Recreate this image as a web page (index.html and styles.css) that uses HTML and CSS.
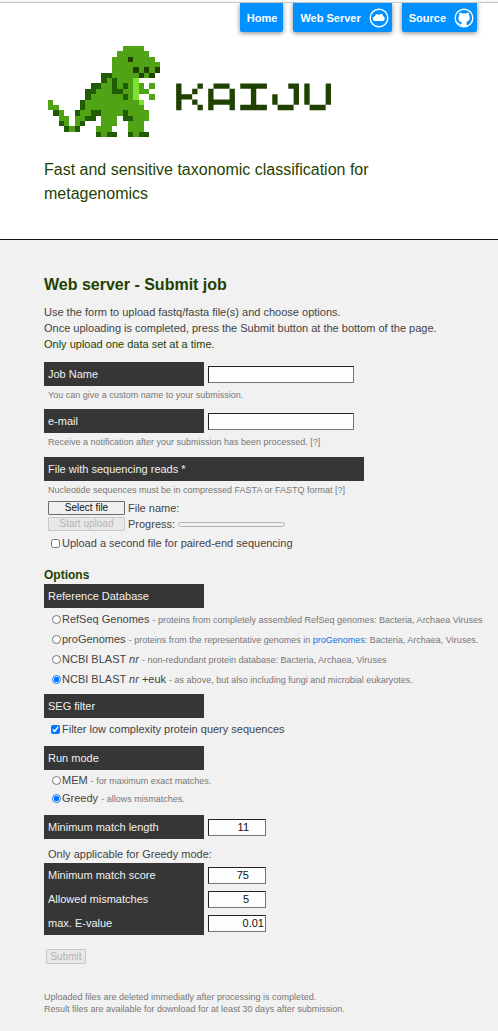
FILE: index.html
```html
<!DOCTYPE html>
<html lang="en">
<head>
<meta charset="utf-8">
<meta name="viewport" content="width=device-width, initial-scale=1">
<title>Kaiju - Web server</title>
<link rel="stylesheet" href="styles.css">
</head>
<body>
<header class="header">
  <nav class="nav">
    <a class="nav-link" href="#home">Home</a>
    <a class="nav-link" href="#server">Web Server
      <svg class="nav-icon" viewBox="0 0 20 20" aria-hidden="true">
        <circle cx="10" cy="10" r="8.8" fill="none" stroke="#fff" stroke-width="1.4"/>
        <path fill="#fff" d="M6 13a2.300 2.300 0 0 1-1.300-4.200L6 8.200 6.800 6.500 8.500 6 10 7.200 11.500 5.800 13.500 6.300 14.300 8.300A2.500 2.500 0 0 1 14 13z"/>
      </svg>
    </a>
    <a class="nav-link" href="#source">Source
      <svg class="nav-icon" viewBox="0 0 20 20" aria-hidden="true">
        <circle cx="10" cy="10" r="8.8" fill="none" stroke="#fff" stroke-width="1.4"/>
        <path fill="#fff" d="M5.500 4.500C6.500 4.400 7.500 4.900 8.300 5.500a8 8 0 0 1 3.600 0c.8-.6 1.800-1.100 2.800-1 .4.900.4 1.800.2 2.500.7.800 1 1.700.9 2.900-.2 2.500-1.600 3.500-3.700 3.800.5.500.7 1.100.7 1.900V19H7.500v-2.100c-1.900.4-2.500-.4-3-1.300-.3-.5-.6-.8-1-1.100 1.200-.3 1.700.5 2.200 1.200.5.6 1 .7 1.800.4.100-.9.300-1.300.6-1.600-2.200-.3-3.600-1.500-3.700-3.900 0-1.200.3-2.100.9-2.900-.2-.900-.2-1.800.2-3.200z"/>
      </svg>
    </a>
  </nav>
  <svg class="logo" viewBox="0 0 53 17" role="img" aria-label="Kaiju" fill="none" stroke-width="1">
    <g shape-rendering="crispEdges">
      <path stroke="#4fa314" d="M14 .5h4M13 1.500h6M12 2.500h8M12 3.500h9M12 4.500h9M12 5.500h7M11 6.500h5M10 7.500h8M19 7.500h1M9 8.500h10M8 9.500h8M19 9.500h1M0 10.500h1M7 10.500h10M0 11.500h2M7 11.500h11M2 12.500h1M6 12.500h13M2 13.500h2M5 13.500h2M10 13.500h3M16 13.500h3M3 14.500h1M5 14.500h1M10 14.500h3M15 14.500h3M4 15.500h1M9 15.500h3M15 15.500h3M10 16.500h1M16 16.500h1"/>
      <path stroke="#1f5c05" d="M10 5.500h2M10 6.500h1M12 6.500h1M8 7.500h2M12 7.500h1M14 7.500h1M7 8.500h2M12 8.500h2M7 9.500h1M14 9.500h1M6 10.500h1M6 11.500h1M1 12.500h1M5 12.500h1M8 12.500h2M14 12.500h1M7 13.500h2M14 13.500h2M2 14.500h1M6 14.500h1M3 15.500h1M5 15.500h1M9 16.500h1M11 16.500h2M15 16.500h1M17 16.500h2"/>
      <path stroke="#4fa314" d="M13 6.500h3"/>
      <path stroke="#7be234" d="M16 6.500h1M16 7.500h1M16 8.500h1M16 9.500h1M17 10.500h1"/>
      <path stroke="#1f4200" d="M15 2.500h1M16 4.500h1M18 4.500h1M20 4.500h1M17 5.500h1M19 5.500h1"/>
    </g>
    <g transform="translate(24 7)" stroke="#1f4200">
      <path d="M.5 0v5M1 2.500h2M4 .5h1M3 1.500h1M3 3.500h1M4 4.500h1"/>
      <path d="M7 .5h3M6.500 1v4M10.500 1v4M7 3.500h3"/>
      <path d="M12 .5h5M14.500 1v3M12 4.500h5"/>
      <path d="M21 .5h2M22.500 1v3M18.500 2v2M19 4.500h3"/>
      <path d="M24.500 0v4M28.500 0v4M25 4.500h3"/>
    </g>
  </svg>
  <p class="tagline">Fast and sensitive taxonomic classification for metagenomics</p>
</header>

<main class="main">
  <h1 class="title">Web server - Submit job</h1>
  <p class="intro">Use the form to upload fastq/fasta file(s) and choose options.<br>
    Once uploading is completed, press the Submit button at the bottom of the page.<br>
    <span class="notice">Only upload one data set at a time.</span></p>

  <form class="form">
    <div class="group">
      <div class="field"><label class="bar" for="job">Job Name</label><input class="text-input" id="job" type="text"></div>
      <p class="hint">You can give a custom name to your submission.</p>
    </div>
    <div class="group">
      <div class="field"><label class="bar" for="email">e-mail</label><input class="text-input" id="email" type="email"></div>
      <p class="hint">Receive a notification after your submission has been processed. [?]</p>
    </div>
    <div class="group upload">
      <div class="bar bar-wide">File with sequencing reads *</div>
      <p class="hint">Nucleotide sequences must be in compressed FASTA or FASTQ format [?]</p>
      <div class="upload-rows">
        <div class="upload-row"><button class="button" type="button">Select file</button><span>File name:</span></div>
        <div class="upload-row"><button class="button" type="button" disabled>Start upload</button><label for="progress">Progress:</label><progress class="progress" id="progress" value="0" max="100"></progress></div>
      </div>
      <label class="check"><input class="tick" type="checkbox">Upload a second file for paired-end sequencing</label>
    </div>

    <h2 class="subtitle">Options</h2>
    <div class="group">
      <div class="bar">Reference Database</div>
      <div class="choices databases">
        <label class="choice"><input class="radio" type="radio" name="db"><span>RefSeq Genomes <small class="note">- proteins from completely assembled RefSeq genomes: Bacteria, Archaea Viruses</small></span></label>
        <label class="choice"><input class="radio" type="radio" name="db"><span>proGenomes <small class="note">- proteins from the representative genomes in <a class="link" href="#progenomes">proGenomes</a>: Bacteria, Archaea, Viruses.</small></span></label>
        <label class="choice"><input class="radio" type="radio" name="db"><span>NCBI BLAST <i>nr</i> <small class="note">- non-redundant protein database: Bacteria, Archaea, Viruses</small></span></label>
        <label class="choice"><input class="radio" type="radio" name="db" checked><span>NCBI BLAST <i>nr</i> +euk <small class="note">- as above, but also including fungi and microbial eukaryotes.</small></span></label>
      </div>
    </div>
    <div class="group">
      <div class="bar">SEG filter</div>
      <label class="check seg"><input class="tick" type="checkbox" checked>Filter low complexity protein query sequences</label>
    </div>
    <div class="group">
      <div class="bar">Run mode</div>
      <div class="choices modes">
        <label class="choice"><input class="radio" type="radio" name="mode"><span>MEM <small class="note">- for maximum exact matches.</small></span></label>
        <label class="choice"><input class="radio" type="radio" name="mode" checked><span>Greedy <small class="note">- allows mismatches.</small></span></label>
      </div>
    </div>
    <div class="group">
      <div class="field"><label class="bar" for="length">Minimum match length</label><input class="text-input number" id="length" type="number" value="11"></div>
      <p class="condition">Only applicable for Greedy mode:</p>
      <div class="field"><label class="bar" for="score">Minimum match score</label><input class="text-input number" id="score" type="number" value="75"></div>
      <div class="field"><label class="bar" for="mismatches">Allowed mismatches</label><input class="text-input number" id="mismatches" type="number" value="5"></div>
      <div class="field"><label class="bar" for="evalue">max. E-value</label><input class="text-input number" id="evalue" type="text" value="0.01"></div>
    </div>
    <button class="button submit" type="submit" disabled>Submit</button>
  </form>
  <p class="retention">Uploaded files are deleted immediatly after processing is completed.<br>
    Result files are available for download for at least 30 days after submission.</p>
</main>
</body>
</html>
```

FILE: styles.css
```css
* { box-sizing: border-box; }

body {
  margin: 0;
  background: #f1f1f1;
  color: #444;
  font: 11px/16px "Liberation Sans", Arial, sans-serif;
}

h1, h2, p { margin: 0; }

.header {
  padding: 0 44px 33px;
  background: #fff;
  border-top: 2px solid #f8f8f8;
  border-bottom: 1px solid #111;
}

.nav {
  display: flex;
  justify-content: flex-end;
  gap: 10px;
  margin: 0 -44px;
  padding-right: 21px;
  border-top: 1px solid #c4c4c4;
}

.nav-link {
  display: flex;
  align-items: center;
  gap: 8px;
  height: 29px;
  padding: 0 3px 0 7px;
  border-radius: 0 0 2px 2px;
  background: #0090ff;
  box-shadow: 0 1px 5px rgba(0, 0, 0, 0.5);
  clip-path: inset(0 -8px -8px);
  color: #fff;
  font-weight: bold;
  text-decoration: none;
}

.nav-link:first-child { padding-right: 6px; }

.nav-icon { width: 20px; height: 20px; }

.logo {
  display: block;
  width: 283px;
  height: 91px;
  margin: 14px 0 0 4px;
}

.tagline {
  margin-top: 21px;
  color: #1f4200;
  font-size: 16px;
  line-height: 24px;
}

.main { padding: 33px 8px 16px 44px; }

.title {
  color: #1f4200;
  font-size: 16px;
  line-height: 24px;
}

.intro { margin-top: 7px; }
.notice { color: #1f4200; }
.form { margin-top: 10px; }
.field { display: flex; align-items: center; gap: 4px; }

.bar {
  width: 160px;
  padding: 0 4px;
  background: #363636;
  color: #f1f1f1;
  line-height: 24px;
}

.bar-wide { width: 320px; }

.text-input {
  width: 146px;
  height: 17px;
  margin: 0;
  padding: 0 1px;
  border: 1px solid #767676;
  border-top-color: #222;
  border-left-color: #222;
  background: #fdfdfd;
  color: #111;
  font: inherit;
}

.number { width: 58px; text-align: right; }

.number::-webkit-inner-spin-button {
  width: 10px;
  margin: 0;
  opacity: 0;
}

.hint {
  padding: 0 4px 5px;
  color: #777;
  font-size: 9px;
  line-height: 18px;
}

.upload { margin-top: 1px; }
.upload .hint { padding-bottom: 0; }

.upload-rows {
  display: grid;
  gap: 2px;
  padding: 2px 4px 0;
}

.upload-row {
  display: flex;
  align-items: center;
  gap: 3px;
  line-height: 14px;
}

.button {
  width: 77px;
  height: 14px;
  padding: 0;
  border: 1px solid #6b6b6b;
  border-radius: 1px;
  background: #efefef;
  color: #111;
  font: 10px/12px "Liberation Sans", Arial, sans-serif;
}

.button:disabled {
  border-color: #c8c8c8;
  background: #e8e8e8;
  color: #b4b4b4;
}

.progress {
  width: 107px;
  height: 5px;
  appearance: none;
  border: 1px solid #b5b5b5;
  border-radius: 3px;
  background: #efefef;
}

.progress::-webkit-progress-bar { background: transparent; }

.check {
  display: flex;
  align-items: center;
  gap: 2px;
  margin-top: 4px;
  padding-left: 7px;
}

.tick, .radio {
  flex: none;
  width: 9px;
  height: 9px;
  margin: 0;
}

.subtitle {
  margin-top: 15px;
  color: #1f4200;
  font-size: 12px;
  line-height: 18px;
}

.choices { padding-left: 8px; }
.choice { display: flex; align-items: center; gap: 1px; }
.databases { padding-top: 1px; padding-bottom: 5px; }
.databases .choice { min-height: 20px; }
.modes { padding-top: 1px; padding-bottom: 8px; }
.modes .choice { min-height: 18px; }
.note { color: #777; font-size: 9px; }
.link { color: #0078e0; text-decoration: none; }
.seg { margin: 3px 0 9px; }

.condition { padding: 7px 4px 1px; }

.submit {
  display: block;
  width: 40px;
  height: 15px;
  margin: 14px 0 0 2px;
}

.retention {
  margin-top: 27px;
  color: #777;
  font-size: 9px;
  line-height: 12px;
}
```
